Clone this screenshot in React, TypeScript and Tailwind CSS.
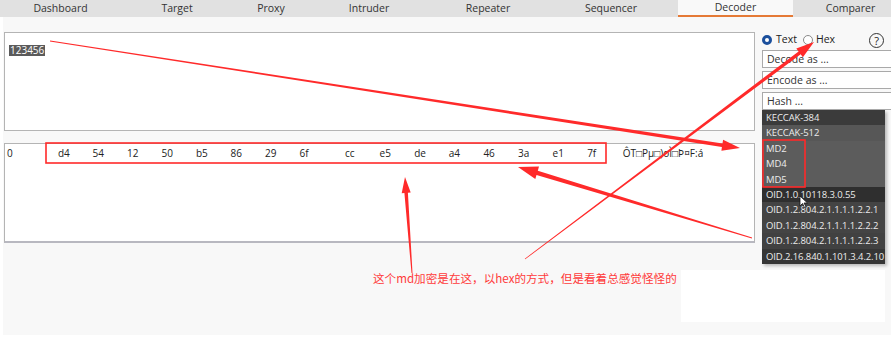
import React from "react";

const tabs: { label: string; w: string; active?: boolean }[] = [
  { label: "Dashboard", w: "w-[115px]" },
  { label: "Target", w: "w-[118px]" },
  { label: "Proxy", w: "w-[70px]" },
  { label: "Intruder", w: "w-[126px]" },
  { label: "Repeater", w: "w-[112px]" },
  { label: "Sequencer", w: "w-[134px]" },
  { label: "Decoder", w: "w-[115px]", active: true },
  { label: "Comparer", w: "w-[115px]" },
];

const bytesA = ["d4", "54", "12", "50", "b5", "86", "29", "6f"];
const bytesB = ["cc", "e5", "de", "a4", "46", "3a", "e1", "7f"];

const hashItems: { label: string; bg: string }[] = [
  { label: "KECCAK-384", bg: "bg-[#3b3b3b]" },
  { label: "KECCAK-512", bg: "bg-[#575757]" },
  { label: "MD2", bg: "bg-[#5c5c5c]" },
  { label: "MD4", bg: "bg-[#5c5c5c]" },
  { label: "MD5", bg: "bg-[#5c5c5c]" },
  { label: "OID.1.0.10118.3.0.55", bg: "bg-[#2f2f2f]" },
  { label: "OID.1.2.804.2.1.1.1.1.2.2.1", bg: "bg-[#444444]" },
  { label: "OID.1.2.804.2.1.1.1.1.2.2.2", bg: "bg-[#444444]" },
  { label: "OID.1.2.804.2.1.1.1.1.2.2.3", bg: "bg-[#414141]" },
  { label: "OID.2.16.840.1.101.3.4.2.10", bg: "bg-[#363636]" },
];

// tapered arrow: thin tail, thick shaft near the head
function arrow(x1: number, y1: number, x2: number, y2: number, w1: number, w2: number, hl: number, hw: number) {
  const dx = x2 - x1;
  const dy = y2 - y1;
  const len = Math.hypot(dx, dy);
  const ux = dx / len;
  const uy = dy / len;
  const nx = -uy;
  const ny = ux;
  const bx = x2 - ux * hl;
  const by = y2 - uy * hl;
  const p = (x: number, y: number) => `${x.toFixed(1)},${y.toFixed(1)}`;
  return [
    p(x1 + nx * w1 / 2, y1 + ny * w1 / 2),
    p(bx + nx * w2 / 2, by + ny * w2 / 2),
    p(bx + nx * hw / 2, by + ny * hw / 2),
    p(x2, y2),
    p(bx - nx * hw / 2, by - ny * hw / 2),
    p(bx - nx * w2 / 2, by - ny * w2 / 2),
    p(x1 - nx * w1 / 2, y1 - ny * w1 / 2),
  ].join(" ");
}

function Select({ label }: { label: string }) {
  return (
    <div className="h-[18px] w-[135px] shrink-0 border border-[#a9a9a9] bg-white pl-[4px] text-[10.5px] leading-[16px] text-[#333]">
      {label}
    </div>
  );
}

export default function App() {
  return (
    <div className="relative w-[891px] h-[349px] overflow-hidden bg-white font-['Open_Sans','Noto_Sans',sans-serif] text-[#222]">
      {/* tab bar */}
      <div className="flex h-[17px] pl-[3px] bg-[#e1e1e1] text-[10.5px] text-[#333]">
        {tabs.map((t) => (
          <div
            key={t.label}
            className={`${t.w} shrink-0 h-[17px] flex items-center justify-center ${
              t.active ? "bg-[#f9f9f9] border-b-2 border-[#e57a36]" : ""
            }`}
          >
            {t.label}
          </div>
        ))}
      </div>

      <div className="ml-[3px] h-[318px] bg-[#f8f8f8] flex">
        {/* left column: input and output */}
        <div className="w-[752px] shrink-0 pt-[15px] pl-[1px] flex flex-col">
          <div className="h-[99px] border border-[#b4b4b4] bg-white pl-[4px] pt-[3px]">
            <span className="bg-[#5b5b5b] text-white text-[10px] leading-[11px] px-[1px] inline-block">123456</span>
          </div>
          <div className="mt-[12px] h-[100px] border border-[#b4b4b4] border-b-2 border-b-[#b8b8c0] bg-white text-[10px]">
            <div className="flex h-[18px] items-center pl-[2px] text-[#222]">
              <div className="w-[51px]">0</div>
              {bytesA.map((b, i) => (
                <div key={"a" + i} className="w-[34.5px]">{b}</div>
              ))}
              <div className="w-[11px]" />
              {bytesB.map((b, i) => (
                <div key={"b" + i} className="w-[34.6px]">{b}</div>
              ))}
              <div className="ml-[1px]">ÔT□Pµ□)oÌ□Þ¤F:á</div>
            </div>
          </div>
          <div className="mt-[27px] pl-[369px] text-[11.6px] text-[#ff3b3b] font-['Noto_Sans_CJK_SC',sans-serif] leading-[16px]">
            这个md加密是在这，以hex的方式，但是看着总感觉怪怪的
          </div>
        </div>

        {/* right column */}
        <div className="ml-[7px] flex-1 min-w-0 pt-[15px]">
          <div className="flex items-center h-[16px] text-[10.5px] text-[#222]">
            <div className="w-[10px] h-[10px] shrink-0 rounded-full border-[3px] border-[#1b4f9c] bg-white" />
            <span className="ml-[4px]">Text</span>
            <div className="ml-[6px] w-[10px] h-[10px] shrink-0 rounded-full border border-[#8a8a8a] bg-white" />
            <span className="ml-[3px]">Hex</span>
            <div className="ml-[34px] w-[15px] h-[15px] shrink-0 rounded-full border-[1.5px] border-[#333] flex items-center justify-center text-[11px] leading-none">
              ?
            </div>
          </div>
          <div className="mt-[2px] flex flex-col gap-[3px]">
            <Select label="Decode as ..." />
            <Select label="Encode as ..." />
            <Select label="Hash ..." />
          </div>
          <div className="w-[123px] shadow-[2px_2px_3px_rgba(0,0,0,0.25)] text-[9.5px] tracking-[-0.1px] text-[#ececec]">
            {hashItems.map((h) => (
              <div key={h.label} className={`${h.bg} h-[15.4px] leading-[15.4px] pl-[4px] whitespace-nowrap overflow-hidden`}>
                {h.label}
              </div>
            ))}
          </div>
        </div>
      </div>

      {/* white patch pasted over the screenshot */}
      <div className="absolute left-[681px] top-[270px] w-[204px] h-[52px] bg-white" />

      {/* annotations */}
      <svg className="absolute inset-0 pointer-events-none" width="891" height="349">
        <rect x="46" y="143" width="560" height="20" fill="none" stroke="#ff2a2a" strokeWidth="1.6" />
        <rect x="763" y="140" width="42" height="47" fill="none" stroke="#ff2a2a" strokeWidth="1.6" />
        <polygon points={arrow(50, 41, 740, 148, 0.8, 3.5, 18, 11)} fill="#ff2a2a" />
        <polygon points={arrow(752, 238, 518, 167, 1, 4.5, 20, 13)} fill="#ff2a2a" />
        <polygon points={arrow(525, 259, 814, 42, 0.8, 3.5, 18, 11)} fill="#ff2a2a" />
        <polygon points={arrow(412, 273, 405, 177, 1, 3.5, 16, 9)} fill="#ff2a2a" />
        <polygon
          points="800,196 800,206 802.5,203.5 804.5,207.5 806,206.8 804,203 807.5,203"
          fill="#ffffff"
          stroke="#111"
          strokeWidth="0.8"
        />
      </svg>
    </div>
  );
}
